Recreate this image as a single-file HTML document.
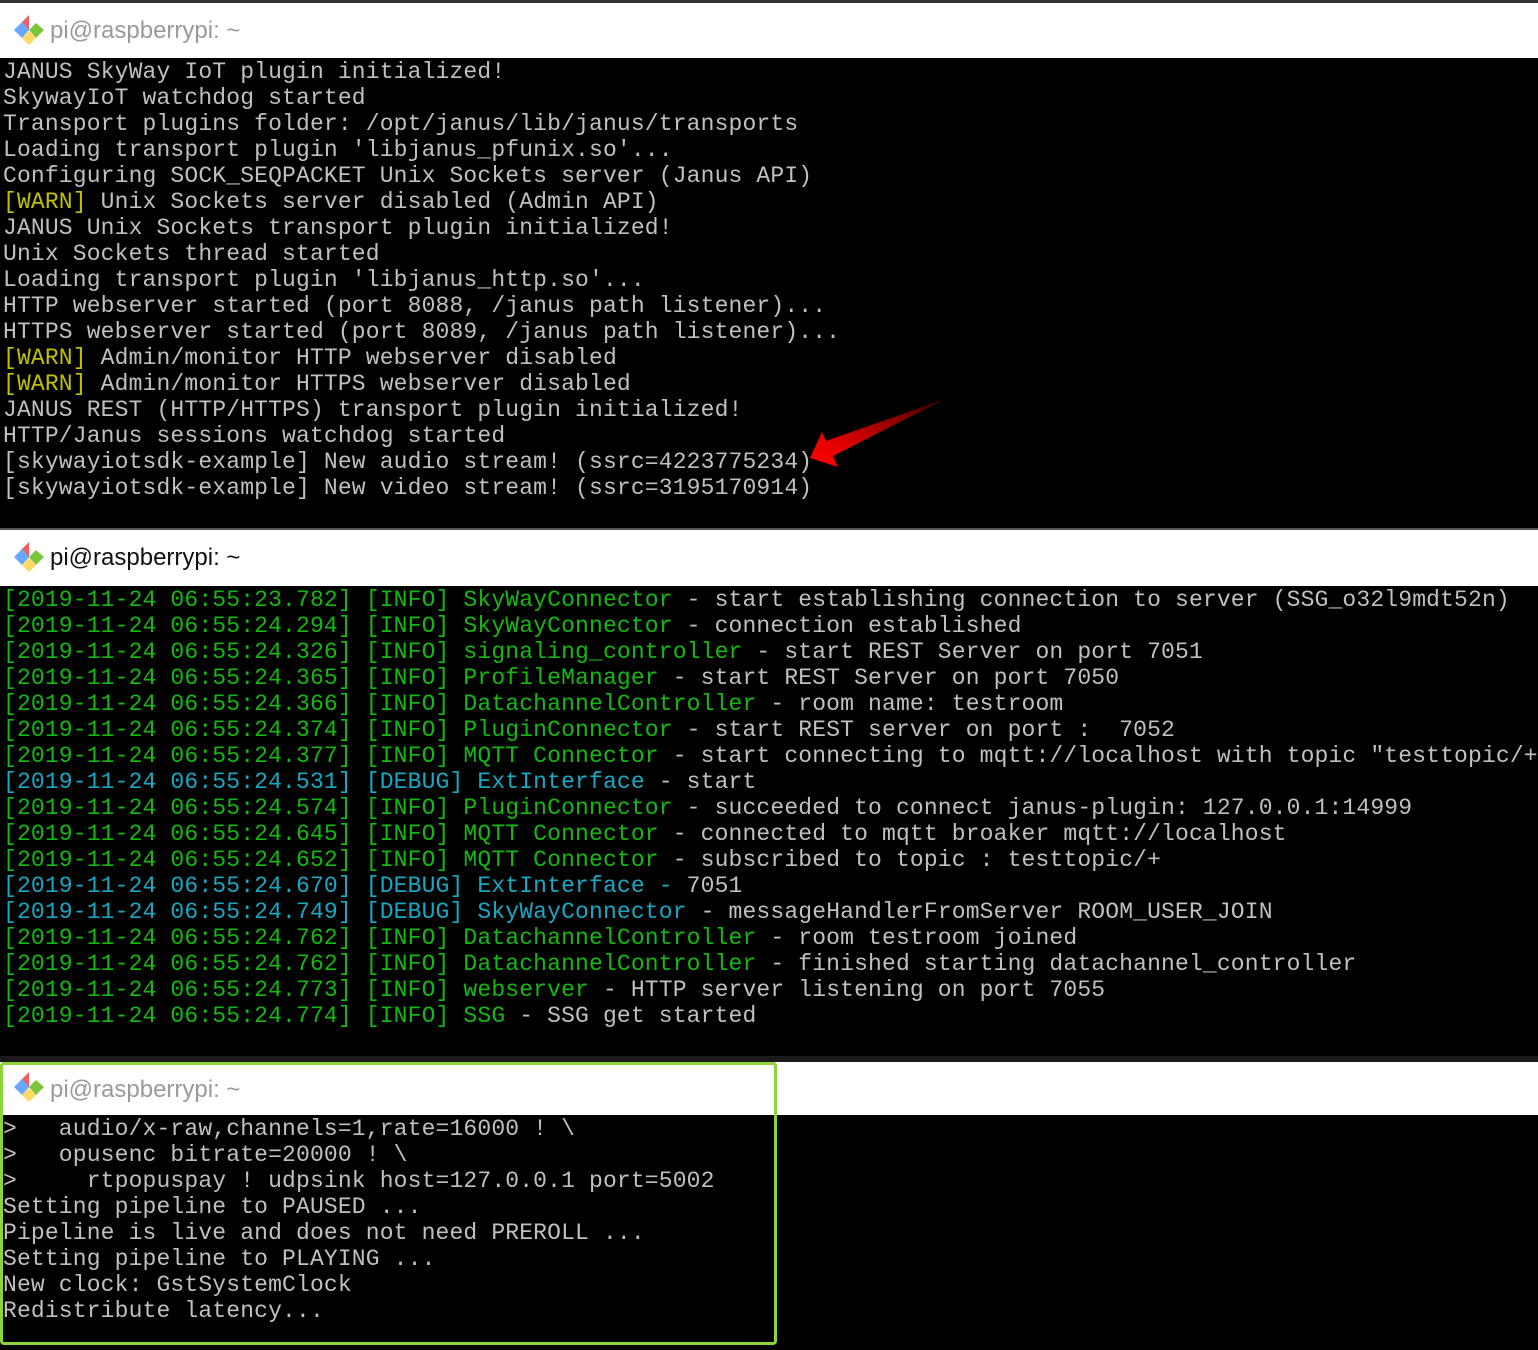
<!DOCTYPE html>
<html><head><meta charset="utf-8"><style>
*{margin:0;padding:0;box-sizing:border-box}
body{width:1538px;height:1350px;background:#000;position:relative;overflow:hidden;font-family:"Liberation Mono",monospace}
.title{position:absolute;left:0;width:1538px;background:#fff;font-family:"Liberation Sans",sans-serif;font-size:24px;}
.title span{position:absolute;left:50px;top:14px}
.term{position:absolute;left:0;width:1538px;background:#000;color:#c0c0c0;font-size:23px;line-height:26px;letter-spacing:0.15px;white-space:pre;padding-left:3px;padding-top:1px;overflow:hidden}
.g{color:#13b90e}.c{color:#17a9c4}.y{color:#c1c100}.w{color:#c0c0c0}
.icon{position:absolute;left:12px;width:34px;height:34px}
</style></head><body>
<div style="position:absolute;left:0;top:0;width:1538px;height:3px;background:#333"></div>
<div class="title" style="top:3px;height:55px;color:#9a9a9a">
<svg class="icon" style="top:10px" viewBox="0 0 34 34"><path d="M17 2 L9 10 L17 18Z" fill="#f06060"/><path d="M2 17 L10 9 L17 17 L10 25Z" fill="#6aa8ff"/><path d="M24 10 L32 17 L24 25 L17 17Z" fill="#7cc63c"/><path d="M10 25 L17 18 L24 25 L17 32Z" fill="#ffd966"/></svg>
<span>pi@raspberrypi: ~</span></div>
<div class="term" style="top:58px;height:470px">JANUS SkyWay IoT plugin initialized!
SkywayIoT watchdog started
Transport plugins folder: /opt/janus/lib/janus/transports
Loading transport plugin 'libjanus_pfunix.so'...
Configuring SOCK_SEQPACKET Unix Sockets server (Janus API)
<span class="y">[WARN]</span> Unix Sockets server disabled (Admin API)
JANUS Unix Sockets transport plugin initialized!
Unix Sockets thread started
Loading transport plugin 'libjanus_http.so'...
HTTP webserver started (port 8088, /janus path listener)...
HTTPS webserver started (port 8089, /janus path listener)...
<span class="y">[WARN]</span> Admin/monitor HTTP webserver disabled
<span class="y">[WARN]</span> Admin/monitor HTTPS webserver disabled
JANUS REST (HTTP/HTTPS) transport plugin initialized!
HTTP/Janus sessions watchdog started
[skywayiotsdk-example] New audio stream! (ssrc=4223775234)
[skywayiotsdk-example] New video stream! (ssrc=3195170914)</div>
<svg style="position:absolute;left:800px;top:395px" width="150" height="80" viewBox="800 395 150 80"><defs><linearGradient id="a" x1="1" y1="0" x2="0" y2="1"><stop offset="0" stop-color="#3a0000"/><stop offset="0.7" stop-color="#e00000"/><stop offset="1" stop-color="#f00"/></linearGradient></defs><path d="M945 399 L826 441 L822 432 L810 458 L838 467 L833 456Z" fill="url(#a)"/></svg>
<div style="position:absolute;left:0;top:528px;width:1538px;height:2px;background:#555"></div>
<div class="title" style="top:530px;height:56px;color:#111">
<svg class="icon" style="top:10px" viewBox="0 0 34 34"><path d="M17 2 L9 10 L17 18Z" fill="#f06060"/><path d="M2 17 L10 9 L17 17 L10 25Z" fill="#6aa8ff"/><path d="M24 10 L32 17 L24 25 L17 17Z" fill="#7cc63c"/><path d="M10 25 L17 18 L24 25 L17 32Z" fill="#ffd966"/></svg>
<span>pi@raspberrypi: ~</span></div>
<div class="term g" style="top:586px;height:470px">[2019-11-24 06:55:23.782] [INFO] SkyWayConnector <span class="w">- start establishing connection to server (SSG_o32l9mdt52n)</span>
[2019-11-24 06:55:24.294] [INFO] SkyWayConnector <span class="w">- connection established</span>
[2019-11-24 06:55:24.326] [INFO] signaling_controller <span class="w">- start REST Server on port 7051</span>
[2019-11-24 06:55:24.365] [INFO] ProfileManager <span class="w">- start REST Server on port 7050</span>
[2019-11-24 06:55:24.366] [INFO] DatachannelController <span class="w">- room name: testroom</span>
[2019-11-24 06:55:24.374] [INFO] PluginConnector <span class="w">- start REST server on port :  7052</span>
[2019-11-24 06:55:24.377] [INFO] MQTT Connector <span class="w">- start connecting to mqtt://localhost with topic "testtopic/+</span>
<span class="c">[2019-11-24 06:55:24.531] [DEBUG] ExtInterface </span><span class="w">- start</span>
[2019-11-24 06:55:24.574] [INFO] PluginConnector <span class="w">- succeeded to connect janus-plugin: 127.0.0.1:14999</span>
[2019-11-24 06:55:24.645] [INFO] MQTT Connector <span class="w">- connected to mqtt broaker mqtt://localhost</span>
[2019-11-24 06:55:24.652] [INFO] MQTT Connector <span class="w">- subscribed to topic : testtopic/+</span>
<span class="c">[2019-11-24 06:55:24.670] [DEBUG] ExtInterface - </span><span class="w">7051</span>
<span class="c">[2019-11-24 06:55:24.749] [DEBUG] SkyWayConnector </span><span class="w">- messageHandlerFromServer ROOM_USER_JOIN</span>
[2019-11-24 06:55:24.762] [INFO] DatachannelController <span class="w">- room testroom joined</span>
[2019-11-24 06:55:24.762] [INFO] DatachannelController <span class="w">- finished starting datachannel_controller</span>
[2019-11-24 06:55:24.773] [INFO] webserver <span class="w">- HTTP server listening on port 7055</span>
[2019-11-24 06:55:24.774] [INFO] SSG <span class="w">- SSG get started</span></div>
<div style="position:absolute;left:0;top:1056px;width:1538px;height:6px;background:#1a1a1a"></div>
<div class="title" style="top:1062px;height:53px;color:#9a9a9a">
<svg class="icon" style="top:8px" viewBox="0 0 34 34"><path d="M17 2 L9 10 L17 18Z" fill="#f06060"/><path d="M2 17 L10 9 L17 17 L10 25Z" fill="#6aa8ff"/><path d="M24 10 L32 17 L24 25 L17 17Z" fill="#7cc63c"/><path d="M10 25 L17 18 L24 25 L17 32Z" fill="#ffd966"/></svg>
<span>pi@raspberrypi: ~</span></div>
<div class="term" style="top:1115px;height:235px">&gt;   audio/x-raw,channels=1,rate=16000 ! \
&gt;   opusenc bitrate=20000 ! \
&gt;     rtpopuspay ! udpsink host=127.0.0.1 port=5002
Setting pipeline to PAUSED ...
Pipeline is live and does not need PREROLL ...
Setting pipeline to PLAYING ...
New clock: GstSystemClock
Redistribute latency...</div>
<div style="position:absolute;left:0;top:1062px;width:777px;height:283px;border:3px solid #8cd43a;border-radius:4px"></div>
</body></html>
